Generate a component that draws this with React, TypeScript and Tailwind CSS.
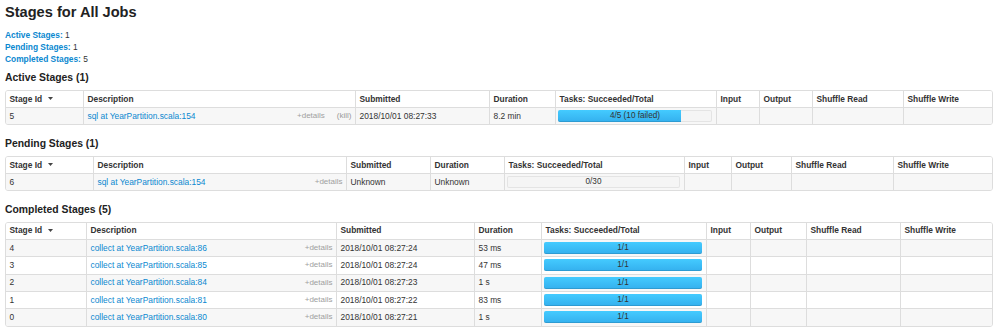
import React from 'react';

interface Stage {
  id: number;
  desc: string;
  kill?: boolean;
  submitted: string;
  duration: string;
  done: number;
  total: number;
  failed?: number;
}

// column widths per table, measured from the border lines
interface Widths {
  id: string;
  desc: string;
  submitted: string;
  duration: string;
  tasks: string;
  input: string;
  output: string;
  read: string;
}

const activeWidths: Widths = {
  id: 'w-[77px]',
  desc: 'w-[272px]',
  submitted: 'w-[134px]',
  duration: 'w-[66px]',
  tasks: 'w-[161px]',
  input: 'w-[43px]',
  output: 'w-[53px]',
  read: 'w-[91px]',
};

const pendingWidths: Widths = {
  id: 'w-[87px]',
  desc: 'w-[253px]',
  submitted: 'w-[84px]',
  duration: 'w-[74px]',
  tasks: 'w-[180px]',
  input: 'w-[47px]',
  output: 'w-[60px]',
  read: 'w-[102px]',
};

const completedWidths: Widths = {
  id: 'w-[80px]',
  desc: 'w-[250px]',
  submitted: 'w-[138px]',
  duration: 'w-[67px]',
  tasks: 'w-[165px]',
  input: 'w-[44px]',
  output: 'w-[56px]',
  read: 'w-[94px]',
};

const activeStages: Stage[] = [
  { id: 5, desc: 'sql at YearPartition.scala:154', kill: true, submitted: '2018/10/01 08:27:33', duration: '8.2 min', done: 4, total: 5, failed: 10 },
];

const pendingStages: Stage[] = [
  { id: 6, desc: 'sql at YearPartition.scala:154', submitted: 'Unknown', duration: 'Unknown', done: 0, total: 30 },
];

const completedStages: Stage[] = [
  { id: 4, desc: 'collect at YearPartition.scala:86', submitted: '2018/10/01 08:27:24', duration: '53 ms', done: 1, total: 1 },
  { id: 3, desc: 'collect at YearPartition.scala:85', submitted: '2018/10/01 08:27:24', duration: '47 ms', done: 1, total: 1 },
  { id: 2, desc: 'collect at YearPartition.scala:84', submitted: '2018/10/01 08:27:23', duration: '1 s', done: 1, total: 1 },
  { id: 1, desc: 'collect at YearPartition.scala:81', submitted: '2018/10/01 08:27:22', duration: '83 ms', done: 1, total: 1 },
  { id: 0, desc: 'collect at YearPartition.scala:80', submitted: '2018/10/01 08:27:21', duration: '1 s', done: 1, total: 1 },
];

const Progress: React.FC<{ done: number; total: number; failed?: number }> = ({ done, total, failed }) => {
  const pct = total ? (done / total) * 100 : 0;
  const label = failed ? `${done}/${total} (${failed} failed)` : `${done}/${total}`;
  return (
    <div className="relative h-[12px] w-full rounded-[2px] bg-[#f5f5f5] shadow-[inset_0_0_0_1px_#e4e4e4]">
      {pct > 0 && (
        <div
          className={`absolute left-0 top-0 h-full bg-linear-to-b from-[#44cbff] to-[#34b0ee] shadow-[inset_0_-1px_0_rgba(0,0,0,0.12)] ${pct >= 100 ? 'rounded-[2px]' : 'rounded-l-[2px]'}`}
          style={{ width: `${pct}%` }}
        />
      )}
      <span className="absolute inset-0 flex items-center justify-center text-[8.2px] text-[#333]">{label}</span>
    </div>
  );
};

const SortArrow = () => (
  <svg width="5" height="3" viewBox="0 0 5 3" className="ml-[6px]">
    <polygon points="0,0 5,0 2.5,3" fill="#444" />
  </svg>
);

const cell = 'flex items-center px-[3.5px] border-l border-[#ddd] shrink-0';

const StageTable: React.FC<{ rows: Stage[]; w: Widths }> = ({ rows, w }) => (
  <div className="rounded-[3px] border border-[#ddd] overflow-hidden text-[8.4px] text-[#333]">
    <div className="flex h-[16.4px] font-bold bg-white">
      <div className={`flex items-center px-[3.5px] shrink-0 ${w.id}`}>
        Stage Id
        <SortArrow />
      </div>
      <div className={`${cell} ${w.desc}`}>Description</div>
      <div className={`${cell} ${w.submitted}`}>Submitted</div>
      <div className={`${cell} ${w.duration}`}>Duration</div>
      <div className={`${cell} ${w.tasks}`}>Tasks: Succeeded/Total</div>
      <div className={`${cell} ${w.input}`}>Input</div>
      <div className={`${cell} ${w.output}`}>Output</div>
      <div className={`${cell} ${w.read}`}>Shuffle Read</div>
      <div className={`${cell} flex-1`}>Shuffle Write</div>
    </div>
    {rows.map((s, i) => (
      <div key={s.id} className={`flex h-[17.35px] border-t border-[#ddd] ${i % 2 === 0 ? 'bg-[#f7f7f7]' : 'bg-white'}`}>
        <div className={`flex items-center px-[3.5px] shrink-0 ${w.id}`}>{s.id}</div>
        <div className={`${cell} ${w.desc}`}>
          <a href="#" className="text-[#0a88d0]">{s.desc}</a>
          <span className="ml-auto text-[8px] text-[#a0a0a0]">+details</span>
          {s.kill && <span className="ml-[12px] text-[8px] text-[#9a9a9a]">(kill)</span>}
        </div>
        <div className={`${cell} ${w.submitted}`}>{s.submitted}</div>
        <div className={`${cell} ${w.duration}`}>{s.duration}</div>
        <div className={`flex items-center pl-[2px] pr-[4px] border-l border-[#ddd] shrink-0 ${w.tasks}`}>
          <Progress done={s.done} total={s.total} failed={s.failed} />
        </div>
        <div className={`${cell} ${w.input}`} />
        <div className={`${cell} ${w.output}`} />
        <div className={`${cell} ${w.read}`} />
        <div className={`${cell} flex-1`} />
      </div>
    ))}
  </div>
);

const App: React.FC = () => {
  return (
    <div className="w-[998px] h-[331px] bg-white px-[5px] font-['Liberation_Sans',Arial,sans-serif] text-[#333] overflow-hidden">
      <h3 className="h-[24px] leading-[24px] text-[14.6px] font-bold text-[#222]">Stages for All Jobs</h3>

      <ul className="mt-[5px] text-[8.4px] leading-[12.2px]">
        <li>
          <a href="#" className="font-bold text-[#0a88d0]">Active Stages:</a> 1
        </li>
        <li>
          <a href="#" className="font-bold text-[#0a88d0]">Pending Stages:</a> 1
        </li>
        <li>
          <a href="#" className="font-bold text-[#0a88d0]">Completed Stages:</a> 5
        </li>
      </ul>

      <h4 className="mt-[5.8px] h-[14px] leading-[14px] text-[10.4px] font-bold text-[#222]">Active Stages (1)</h4>
      <div className="mt-[4.3px]">
        <StageTable rows={activeStages} w={activeWidths} />
      </div>

      <h4 className="mt-[11.2px] h-[14px] leading-[14px] text-[10.4px] font-bold text-[#222]">Pending Stages (1)</h4>
      <div className="mt-[5px]">
        <StageTable rows={pendingStages} w={pendingWidths} />
      </div>

      <h4 className="mt-[11.2px] h-[14px] leading-[14px] text-[10.4px] font-bold text-[#222]">Completed Stages (5)</h4>
      <div className="mt-[5px]">
        <StageTable rows={completedStages} w={completedWidths} />
      </div>
    </div>
  );
};

export default App;
